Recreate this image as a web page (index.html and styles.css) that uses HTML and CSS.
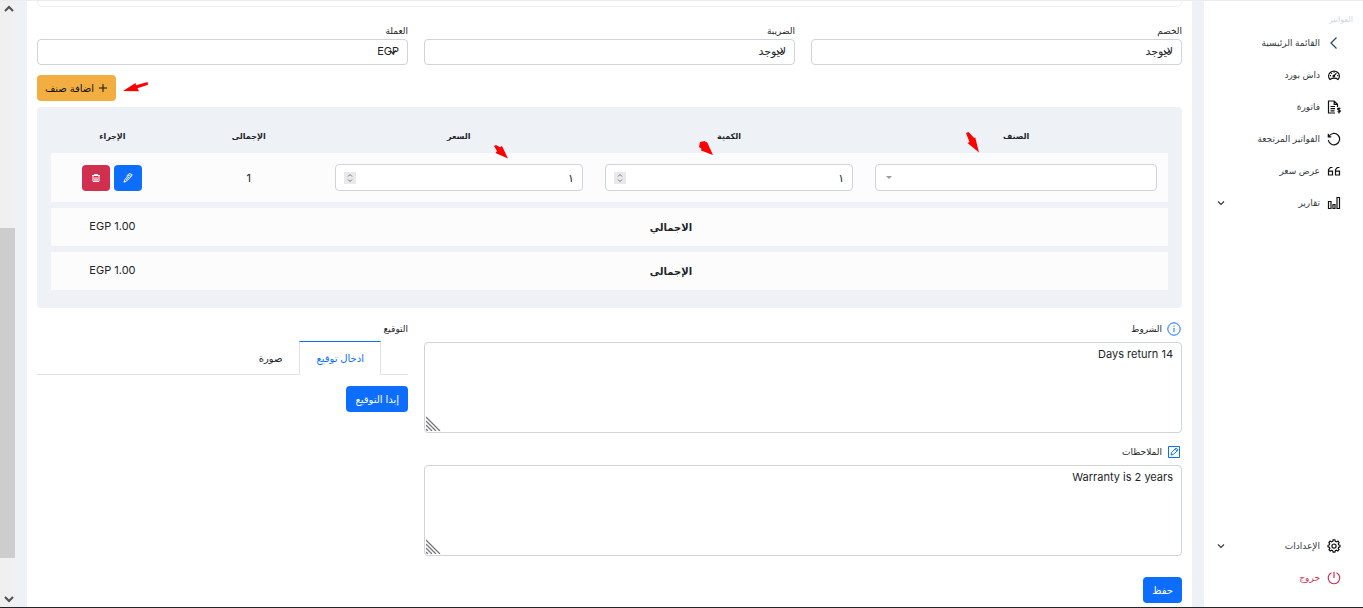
FILE: index.html
```html
<!DOCTYPE html>
<html lang="ar" dir="rtl">
<head>
<meta charset="utf-8">
<meta name="viewport" content="width=device-width, initial-scale=1">
<title>الفواتير</title>
<link rel="stylesheet" href="styles.css">
</head>
<body>
<div class="page">
  <nav class="sidebar" aria-label="الفواتير">
    <p class="sidebar-title">الفواتير</p>
    <ul class="menu">
      <li><a class="menu-link" href="#home">
        <svg class="icon accent" viewBox="0 0 14 14"><path d="M9.500 1.500 4 7l5.500 5.500"/></svg>
        <span>القائمة الرئيسية</span></a></li>
      <li><a class="menu-link" href="#dashboard">
        <svg class="icon" viewBox="0 0 14 14"><path d="M3 11.500a5.400 5 0 1 1 8 0c-1-.9-2.400-1.300-4-1.300s-3 .4-4 1.300zM6.400 8.500l3-3.300M7 3.800v1M3 7.700h1M10.200 7.700h1M4.200 5.200l.6.6"/><circle cx="6.800" cy="8.100" r=".8"/></svg>
        <span>داش بورد</span></a></li>
      <li><a class="menu-link" href="#invoice">
        <svg class="icon" viewBox="0 0 14 14"><path d="M8 13H1.500V1h5.700L10.500 4.300V7M7.200 1v3.300h3.300M3.500 6.500h4.500M3.500 8.700h4.500M3.500 10.900h4M13.300 8.700c-.5-.7-2.700-.8-2.700.4 0 1.300 2.800.7 2.800 2 0 1.200-2.300 1.200-2.900.4M12 7.600v5.900"/></svg>
        <span>فاتورة</span></a></li>
      <li><a class="menu-link" href="#returns">
        <svg class="icon" viewBox="0 0 14 14"><path d="M1.800 4.600A5.700 5.700 0 1 1 1.300 8M1.300 1.800v3h3"/></svg>
        <span>الفواتير المرتجعة</span></a></li>
      <li><a class="menu-link" href="#quote">
        <svg class="icon" viewBox="0 0 14 14"><path d="M5.500 3.500H3.300L1.500 5.700V11h4V7.200h-4M12.500 3.500h-2.200L8.500 5.700V11h4V7.200h-4"/></svg>
        <span>عرض سعر</span></a></li>
      <li><a class="menu-link" href="#reports">
        <svg class="icon" viewBox="0 0 14 14"><path d="M1.500 5.500h2.500v7H1.500zM6 8.500h2v4H6zM10 1.500h2.500v11H10z"/></svg>
        <span>تقارير</span>
        <svg class="caret" viewBox="0 0 8 8"><path d="m1 2.500 3 3 3-3"/></svg></a></li>
    </ul>
    <ul class="menu menu-bottom">
      <li><a class="menu-link" href="#settings">
        <svg class="icon" viewBox="0 0 14 14"><path d="M5.700 2.300 6.100.9h1.800l.4 1.400 1.200.6 1.400-.8 1.200 1.500-.8 1.200.3 1 1.400.5v1.600l-1.400.4-.4 1.100.8 1.300-1.200 1.300-1.400-.8-1.100.5-.4 1.400H6.100l-.4-1.400-1.100-.5-1.400.8L2 10.700l.8-1.300-.4-1.100L1 7.900V6.300l1.400-.5.3-1-.8-1.200 1.200-1.500 1.400.8z"/><circle cx="7" cy="7.100" r="2.100"/></svg>
        <span>الإعدادات</span>
        <svg class="caret" viewBox="0 0 8 8"><path d="m1 2.500 3 3 3-3"/></svg></a></li>
      <li><a class="menu-link danger" href="#logout">
        <svg class="icon" viewBox="0 0 14 14"><path d="M4.500 1.700a5.800 5.800 0 1 0 5 0M7 .8V7"/></svg>
        <span>خروج</span></a></li>
    </ul>
  </nav>

  <main class="card">
    <div class="prev-panel"></div>

    <form class="form">
      <div class="columns">
        <div class="field">
          <label for="discount">الخصم</label>
          <select id="discount" class="control select"><option>لايوجد</option></select>
        </div>
        <div class="field">
          <label for="tax">الضريبة</label>
          <select id="tax" class="control select"><option>لايوجد</option></select>
        </div>
        <div class="field">
          <label for="currency">العملة</label>
          <select id="currency" class="control select"><option>EGP</option></select>
        </div>
      </div>

      <div class="toolbar">
        <svg class="pointer" viewBox="0 0 26 12"><path d="M0 9 12.500 1l.5 2.300L24.500 0l.6 2.700L14.500 6.200 16 9.300z"/></svg>
        <button type="button" class="btn btn-warning">
          <svg class="plus" viewBox="0 0 10 10"><path d="M5 1v8M1 5h8"/></svg>اضافة صنف</button>
      </div>

      <div class="items">
        <table class="items-table">
          <colgroup><col class="col-item"><col class="col-num"><col class="col-num"><col class="col-total"><col class="col-action"></colgroup>
          <thead>
            <tr>
              <th scope="col">الصنف<svg class="arrow arrow-item" viewBox="0 0 14 21"><path d="M0 1 2.500 0l5.700 6 1-.8L13 20.500 1.500 11l2-1z"/></svg></th>
              <th scope="col">الكمية<svg class="arrow arrow-num" viewBox="0 0 14 14"><path d="M1 1 6 0l.5 1.200L8 1l6 13L2 9.500l.5-1.800L0 6z"/></svg></th>
              <th scope="col">السعر<svg class="arrow arrow-price" viewBox="0 0 14 14"><path d="M0 1 2 0l4 2.300L8 1l6 12.500L1.500 8 3 6z"/></svg></th>
              <th scope="col">الإجمالى</th>
              <th scope="col">الإجراء</th>
            </tr>
          </thead>
          <tbody>
            <tr class="row-item">
              <td><select class="control select-item" aria-label="الصنف"><option></option></select></td>
              <td><div class="control number">
                <input type="text" inputmode="numeric" value="١" aria-label="الكمية">
                <button type="button" class="spin" aria-label="تغيير الكمية"><svg viewBox="0 0 12 12"><path d="m4 4.500 2-2 2 2M4 7.500l2 2 2-2"/></svg></button>
              </div></td>
              <td><div class="control number">
                <input type="text" inputmode="numeric" value="١" aria-label="السعر">
                <button type="button" class="spin" aria-label="تغيير السعر"><svg viewBox="0 0 12 12"><path d="m4 4.500 2-2 2 2M4 7.500l2 2 2-2"/></svg></button>
              </div></td>
              <td>1</td>
              <td><div class="actions">
                <button type="button" class="btn btn-primary btn-icon" aria-label="تعديل"><svg viewBox="0 0 10 10"><path d="M1 9.200 2 6.300 6.300 2 8 3.700 3.700 8zM3.500 3l3-2.500 2.700 1.300L8 3.700M3.200 7l3.300-3.300"/></svg></button>
                <button type="button" class="btn btn-danger btn-icon" aria-label="حذف"><svg viewBox="0 0 10 10"><path d="M1 2.500h8M3.500 2.500v-1h3v1M2 2.500V8.500h6V2.500M4 4v3M6 4v3M3 7h4"/></svg></button>
              </div></td>
            </tr>
            <tr class="row-sum"><th colspan="4" scope="row">الاجمالي</th><td>EGP 1.00</td></tr>
            <tr class="row-sum"><th colspan="4" scope="row">الإجمالى</th><td>EGP 1.00</td></tr>
          </tbody>
        </table>
      </div>

      <div class="columns details">
        <div class="notes">
          <label class="note-label" for="terms">
            <svg class="note-icon" viewBox="0 0 14 14"><circle cx="7" cy="7" r="6.200"/><path d="M7 6v4.200M7 3.600v1.200"/></svg>الشروط</label>
          <div class="area">
            <textarea id="terms" class="control">Days return 14</textarea>
            <svg class="grip" viewBox="0 0 15 15"><path d="m0 1 14 14M0 5l10 10M0 9l6 6M0 13l2 2"/></svg>
          </div>
          <label class="note-label" for="remarks">
            <svg class="note-icon" viewBox="0 0 14 14"><path d="M1.500 1.500h11v11h-11zM4 10l.6-2.500 4.500-4.500 1.900 1.900-4.500 4.500zM8 4.200l1.800 1.800"/></svg>الملاحظات</label>
          <div class="area">
            <textarea id="remarks" class="control">Warranty is 2 years</textarea>
            <svg class="grip" viewBox="0 0 15 15"><path d="m0 1 14 14M0 5l10 10M0 9l6 6M0 13l2 2"/></svg>
          </div>
        </div>
        <section class="signature">
          <h2 class="signature-title">التوقيع</h2>
          <div class="tabs" role="tablist">
            <button type="button" class="tab active" role="tab" aria-selected="true">ادخال توقيع</button>
            <button type="button" class="tab" role="tab" aria-selected="false">صورة</button>
          </div>
          <button type="button" class="btn btn-primary">إبدا التوقيع</button>
        </section>
      </div>

      <div class="submit"><button type="submit" class="btn btn-primary">حفظ</button></div>
    </form>
  </main>

  <div class="scrollbar" aria-hidden="true">
    <svg viewBox="0 0 10 8"><path d="m1 6 4-4 4 4"/></svg>
    <div class="track"><div class="thumb"></div></div>
    <svg viewBox="0 0 10 8"><path d="m1 2 4 4 4-4"/></svg>
  </div>
</div>
</body>
</html>
```
FILE: styles.css
```css
* { box-sizing: border-box; }

body {
  margin: 0;
  font-family: Inter, "DejaVu Sans", sans-serif;
  font-size: 11px;
  line-height: 16px;
  color: #212529;
  background: #eef2f6;
}

button, input, select, textarea { font: inherit; color: inherit; }

svg { display: block; flex: none; fill: none; stroke: currentColor; stroke-width: 1; }

.page {
  display: flex;
  min-height: 100vh;
  border-top: 1px solid #ecebf2;
  border-bottom: 1px solid #212529;
}

/* Sidebar */
.sidebar {
  display: flex;
  flex-direction: column;
  flex: none;
  width: 159px;
  padding: 10px 10px 13px;
  background: #fff;
  font-size: 9px;
}
.sidebar-title { margin: 0; color: #ccd6de; font-size: 8px; }
.menu { margin: 0; padding: 0; list-style: none; }
.menu-bottom { margin-top: auto; }
.menu-link {
  display: flex;
  align-items: center;
  gap: 7px;
  height: 32px;
  padding: 0 12px 0 3px;
  color: #343a40;
  text-decoration: none;
  white-space: nowrap;
}
.icon { width: 14px; height: 14px; color: #111; stroke-width: 1.200; }
.accent { color: #1c4670; }
.danger, .danger .icon { color: #d02f4f; }
.caret { width: 8px; height: 8px; margin-inline-start: auto; stroke-width: 1.200; }

/* Main card */
.card {
  flex: 1;
  min-width: 0;
  margin: 0 12px;
  padding: 0 10px 4px;
  background: #fff;
}
.prev-panel {
  height: 6px;
  border: 1px solid #eceff3;
  border-top: 0;
  border-radius: 0 0 5px 5px;
}
.form { padding-top: 16px; }
.columns { display: grid; grid-template-columns: repeat(3, minmax(0, 1fr)); gap: 16px; }
.field { display: flex; flex-direction: column; }
.field label, .signature-title { font-size: 9px; font-weight: 400; }

.control {
  display: block;
  width: 100%;
  border: 1px solid #ced4da;
  border-radius: 4px;
  background-color: #fff;
}
.select {
  height: 26px;
  padding: 0 8px 2px;
  appearance: none;
  background-image: url("data:image/svg+xml,%3Csvg xmlns='http://www.w3.org/2000/svg' viewBox='0 0 8 6'%3E%3Cpath fill='none' stroke='%23343a40' stroke-width='1.400' d='m1 1.500 3 3 3-3'/%3E%3C/svg%3E");
  background-repeat: no-repeat;
  background-position: right 10px center;
  background-size: 8px 6px;
}
.select-item {
  height: 27px;
  appearance: none;
  background-image: url("data:image/svg+xml,%3Csvg xmlns='http://www.w3.org/2000/svg' viewBox='0 0 6 3'%3E%3Cpath fill='%23999' d='M0 0h6L3 3z'/%3E%3C/svg%3E");
  background-repeat: no-repeat;
  background-position: left 10px center;
  background-size: 6px 3px;
}

.btn {
  display: inline-flex;
  align-items: center;
  justify-content: center;
  gap: 4px;
  height: 26px;
  padding: 0 9px;
  border: 0;
  border-radius: 4px;
  font-size: 10px;
  white-space: nowrap;
}
.btn-primary { background: #0d6efd; color: #fff; }
.btn-danger { background: #d02f4f; color: #fff; }
.btn-warning { padding: 0 8px; background: #f3ae41; color: #111; }
.btn-icon { width: 28px; padding: 0; }
.btn-icon svg { width: 10px; height: 10px; }
.plus { width: 10px; height: 10px; }

.toolbar { display: flex; align-items: center; justify-content: flex-end; gap: 7px; margin: 10px 0 6px; }
.pointer { width: 26px; height: 12px; fill: #f00; stroke: none; }

/* Items table */
.items { padding: 12px 14px; border-radius: 4px; background: #eef2f6; }
.items-table { width: 100%; table-layout: fixed; border-collapse: separate; border-spacing: 0 6px; text-align: center; }
.items-table th, .items-table td { padding: 0 11px; }
.col-item { width: 27.2%; }
.col-num { width: 24.2%; }
.col-total { width: 13.4%; }
.col-action { width: 11%; }
thead th { position: relative; height: 22px; font-size: 8px; }
tbody tr { background: #fcfcfc; }
.row-item { height: 49px; }
.row-sum { height: 38px; }
.items-table .row-sum td { padding-bottom: 2px; }
.row-sum th { font-size: 10px; }
.arrow { position: absolute; fill: #f00; stroke: none; }
.arrow-item { width: 14px; height: 21px; right: 62%; top: 7px; }
.arrow-num { width: 14px; height: 14px; right: 56%; top: 16px; }
.arrow-price { width: 14px; height: 14px; left: 63%; top: 20px; }
.number { display: flex; align-items: center; height: 27px; padding: 0 8px; }
.number input { flex: 1; min-width: 0; padding: 0; border: 0; outline: 0; background: none; }
.spin { width: 12px; height: 12px; padding: 0; border: 0; background: #e9e9ed; color: #777; }
.actions { display: flex; justify-content: center; gap: 4px; }
.items-table td:last-child { padding-inline: 0; }

/* Notes and signature */
.details { margin-top: 13px; }
.notes { grid-column: span 2; }
.note-label { display: flex; align-items: center; gap: 5px; height: 16px; margin: 0 1px 5px; font-size: 9px; }
.note-icon { width: 14px; height: 14px; color: #0d6efd; }
.area { position: relative; margin-bottom: 11px; }
.area textarea { height: 91px; padding: 3px 8px; resize: none; }
.grip { position: absolute; left: 2px; bottom: 2px; width: 15px; height: 15px; color: #777; stroke-width: 1.300; }
.signature-title { margin: 0 0 4px; line-height: 16px; }
.tabs { display: flex; height: 34px; margin-bottom: 11px; padding-right: 27px; border-bottom: 1px solid #dee2e6; }
.tab { height: 34px; padding: 0 16px; border: 1px solid transparent; background: none; font-size: 10px; }
.tab.active { border-color: #0d6efd #dee2e6 #fff; background: #fff; color: #0d6efd; }
.submit { margin-top: 10px; }

/* Scrollbar */
.scrollbar { display: flex; flex-direction: column; align-items: center; flex: none; width: 15px; padding: 4px 0; background: #f0f0f0; color: #505050; }
.scrollbar svg { width: 10px; height: 8px; margin-left: 2px; stroke-width: 2; }
.track { display: flex; flex-direction: column; flex: 1; width: 100%; padding: 215px 0 37px; }
.thumb { flex: 1; background: #cdcdcd; }
```
